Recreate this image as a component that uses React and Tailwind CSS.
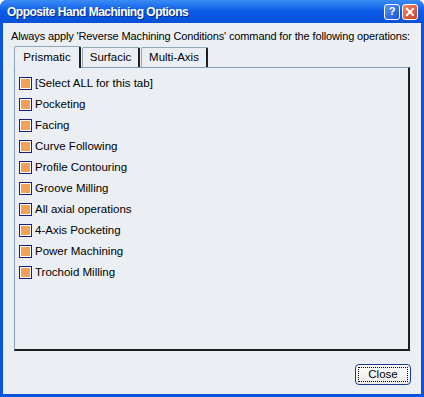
import { useState } from "react";

const operations = [
  "[Select ALL for this tab]",
  "Pocketing",
  "Facing",
  "Curve Following",
  "Profile Contouring",
  "Groove Milling",
  "All axial operations",
  "4-Axis Pocketing",
  "Power Machining",
  "Trochoid Milling",
];

const tabs = ["Prismatic", "Surfacic", "Multi-Axis"];

const CheckItem = ({ label }) => (
  <div className="flex items-center h-[21px]">
    <div className="w-[13px] h-[13px] border border-[#1c1c7a] bg-white p-[1px]">
      <div className="w-full h-full bg-[#f3a159]"></div>
    </div>
    <span className="ml-[3px] whitespace-nowrap">{label}</span>
  </div>
);

export default function App() {
  const [active, setActive] = useState(0);

  return (
    <div
      className="w-[424px] h-[397px] bg-[#0a55e0] rounded-t-[7px] flex flex-col text-[11px] text-black"
      style={{ fontFamily: '"Liberation Sans", Arial, sans-serif' }}
    >
      {/* title bar */}
      <div className="h-[23px] flex items-center pl-[7px] pr-[6px] rounded-t-[7px] bg-gradient-to-b from-[#3b8cf5] via-[#0a5ae6] to-[#0850d8]">
        <span className="text-white font-bold text-[12px] tracking-[-0.5px] whitespace-nowrap [text-shadow:1px_1px_0_#0a2a8a]">
          Opposite Hand Machining Options
        </span>
        <div className="ml-auto flex gap-[2px]">
          <div className="w-[16px] h-[16px] rounded-[3px] border border-white bg-gradient-to-br from-[#5b94f7] to-[#1a4fd8] flex items-center justify-center text-white font-bold text-[11px] leading-none">
            ?
          </div>
          <div className="w-[16px] h-[16px] rounded-[3px] border border-white bg-gradient-to-br from-[#f08a6a] to-[#c63a14] flex items-center justify-center">
            <svg width="10" height="10" viewBox="0 0 10 10">
              <path d="M2 2 L8 8 M8 2 L2 8" stroke="white" strokeWidth="2" strokeLinecap="square" />
            </svg>
          </div>
        </div>
      </div>

      {/* body */}
      <div className="flex-1 mx-[3px] mb-[3px] bg-[#ebeff3] flex flex-col px-[11px]">
        <div className="pt-[7px] h-[23px] leading-[13px] -ml-[3px] whitespace-nowrap text-[11px] tracking-[-0.13px]">
          Always apply 'Reverse Machining Conditions' command for the following operations:
        </div>

        {/* tabs */}
        <div className="flex items-end h-[21px] relative z-10">
          {tabs.map((t, i) => (
            <button
              key={t}
              onClick={() => setActive(i)}
              className={`whitespace-nowrap px-0 border-t border-l border-[#91a7b4] border-r-2 border-r-[#1e1e1e] rounded-t-[2px] ${
                active === i
                  ? "h-[22px] bg-[#ebeff3] border-b-0 -mb-[1px] w-[67px] text-[11.5px]"
                  : "h-[20px] bg-[#ebeff3] ml-[1px] text-[11.5px] " + (i === 1 ? "w-[58px]" : "w-[67px]")
              }`}
            >
              {t}
            </button>
          ))}
        </div>

        <div className="w-[396px] h-[284px] border-l border-t border-[#7f9db9] border-r-2 border-b-2 border-r-[#1e1e1e] border-b-[#1e1e1e] pt-[5px] pl-[4px] text-[11.5px]">
          {operations.map((op) => (
            <CheckItem key={op} label={op} />
          ))}
        </div>

        <div className="flex justify-end mt-[13px]">
          <button className="w-[56px] h-[21px] rounded-[4px] border border-[#1c3a94] bg-gradient-to-b from-white to-[#ecebe6] p-[2px] -mr-[1px] text-[11.5px]">
            <div className="w-full h-full border border-dotted border-black flex items-center justify-center leading-none">
              Close
            </div>
          </button>
        </div>
      </div>
    </div>
  );
}
